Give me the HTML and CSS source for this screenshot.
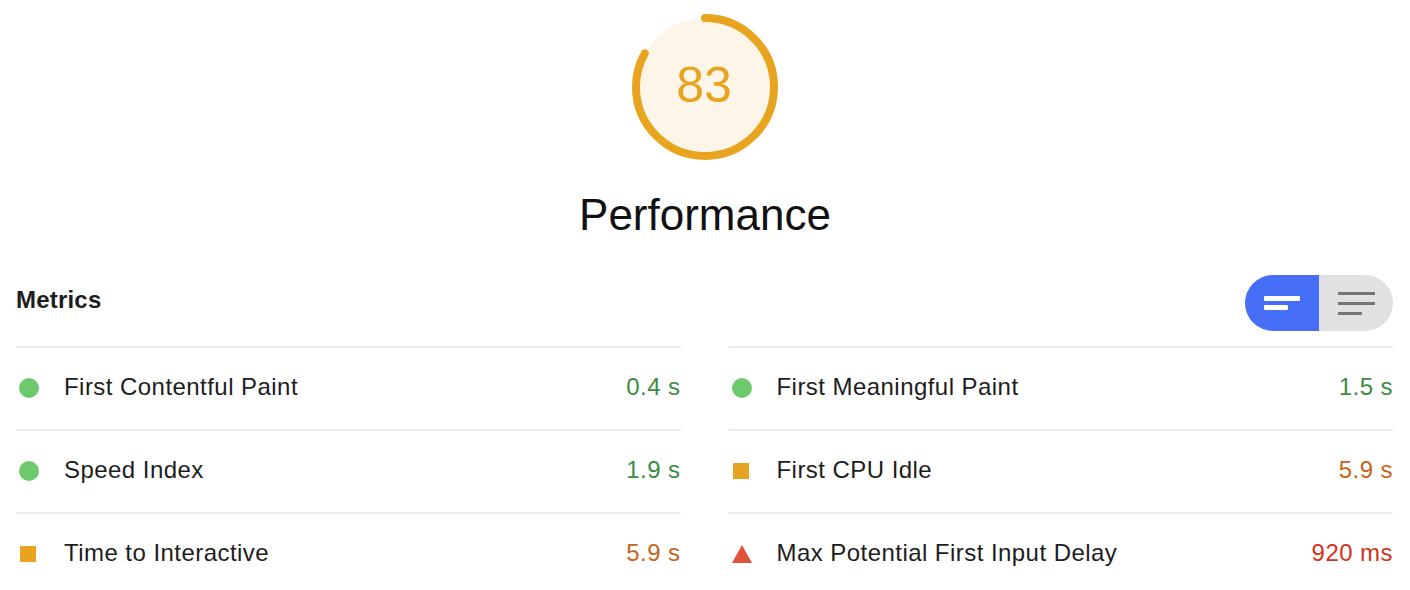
FILE: index.html
```html
<!DOCTYPE html>
<html lang="en">
<head>
<meta charset="utf-8">
<title>Performance</title>
<link rel="stylesheet" href="styles.css">
</head>
<body>
<div class="page">
  <section class="gauge-wrap">
    <svg class="gauge" viewBox="0 0 146 146" width="146" height="146">
      <circle cx="73" cy="73" r="69" fill="#fdf6e8"/>
      <circle cx="73" cy="73" r="69" fill="none" stroke="#e9a41f" stroke-width="8" stroke-linecap="round" stroke-dasharray="359.8 433.6" transform="rotate(-90 73 73)"/>
      <text x="72" y="88" text-anchor="middle" class="score">83</text>
    </svg>
    <h1 class="title">Performance</h1>
  </section>

  <section class="metrics">
    <div class="metrics-header">
      <h2 class="metrics-title">Metrics</h2>
      <div class="toggle">
        <div class="opt opt-active">
          <svg width="36" height="14" viewBox="0 0 36 14"><rect x="0" y="0" width="36" height="5" rx="1" fill="#fff"/><rect x="0" y="9" width="24" height="5" rx="1" fill="#fff"/></svg>
        </div>
        <div class="opt opt-rest">
          <svg width="37" height="23" viewBox="0 0 37 23"><rect x="0" y="0" width="37" height="3" fill="#757575"/><rect x="0" y="10" width="37" height="3" fill="#757575"/><rect x="0" y="20" width="24" height="3" fill="#757575"/></svg>
        </div>
      </div>
    </div>

    <div class="grid">
      <div class="metric">
        <span class="icon"><span class="dot pass"></span></span>
        <span class="label">First Contentful Paint</span>
        <span class="value v-pass">0.4&nbsp;s</span>
      </div>
      <div class="metric">
        <span class="icon"><span class="dot pass"></span></span>
        <span class="label">First Meaningful Paint</span>
        <span class="value v-pass">1.5&nbsp;s</span>
      </div>
      <div class="metric">
        <span class="icon"><span class="dot pass"></span></span>
        <span class="label">Speed Index</span>
        <span class="value v-pass">1.9&nbsp;s</span>
      </div>
      <div class="metric">
        <span class="icon"><span class="square"></span></span>
        <span class="label">First CPU Idle</span>
        <span class="value v-avg">5.9&nbsp;s</span>
      </div>
      <div class="metric">
        <span class="icon"><span class="square"></span></span>
        <span class="label">Time to Interactive</span>
        <span class="value v-avg">5.9&nbsp;s</span>
      </div>
      <div class="metric">
        <span class="icon"><svg class="tri" width="20" height="18" viewBox="0 0 20 18"><polygon points="10,0 20,18 0,18" fill="#e1533a"/></svg></span>
        <span class="label">Max Potential First Input Delay</span>
        <span class="value v-fail">920&nbsp;ms</span>
      </div>
    </div>
  </section>
</div>
</body>
</html>
```
FILE: styles.css
```css
html, body {
  margin: 0;
  padding: 0;
  background: #ffffff;
}

body {
  font-family: "Liberation Sans", Arial, Helvetica, sans-serif;
  color: #1d1d1d;
}

.page {
  width: 1410px;
}

.gauge-wrap {
  display: flex;
  flex-direction: column;
  align-items: center;
  padding-top: 14px;
}

.gauge {
  display: block;
}

.score {
  font-family: "Liberation Sans", Arial, sans-serif;
  font-size: 50px;
  fill: #e9a41f;
}

.title {
  margin: 33px 0 0;
  font-size: 44px;
  font-weight: 400;
  line-height: 44px;
  color: #111111;
}

.metrics {
  padding: 38px 17px 0 16px;
}

.metrics-header {
  display: flex;
  justify-content: space-between;
  align-items: center;
  margin-bottom: 15px;
}

.metrics-title {
  margin: 0;
  padding-bottom: 6px;
  font-size: 24px;
  font-weight: 700;
  letter-spacing: 0.2px;
  color: #1d1d1d;
}

.toggle {
  display: flex;
  width: 148px;
  height: 56px;
  border-radius: 28px;
  overflow: hidden;
}

.opt {
  flex: 1;
  display: flex;
  align-items: center;
  justify-content: center;
}

.opt svg {
  display: block;
}

.opt-active {
  background: #476ef6;
}

.opt-rest {
  background: #e1e1e1;
}

.grid {
  display: grid;
  grid-template-columns: 1fr 1fr;
  column-gap: 48px;
}

.metric {
  display: flex;
  align-items: center;
  box-sizing: border-box;
  height: 83px;
  padding-bottom: 3px;
  border-top: 2px solid #ececec;
  font-size: 24px;
  letter-spacing: 0.45px;
}

.icon {
  flex: none;
  width: 45px;
  padding-left: 3px;
  padding-top: 2px;
  display: flex;
  align-items: center;
}

.dot {
  display: block;
  width: 20px;
  height: 20px;
  border-radius: 50%;
}

.pass {
  background: #6cc96c;
}

.square {
  display: block;
  width: 16px;
  height: 16px;
  margin-left: 1px;
  background: #e9a41f;
}

.tri {
  display: block;
}

.label {
  flex: 1;
  color: #1d1d1d;
}

.value {
  flex: none;
  text-align: right;
}

.v-pass {
  color: #3a8d3f;
}

.v-avg {
  color: #c6641c;
}

.v-fail {
  color: #d3311b;
}
```
